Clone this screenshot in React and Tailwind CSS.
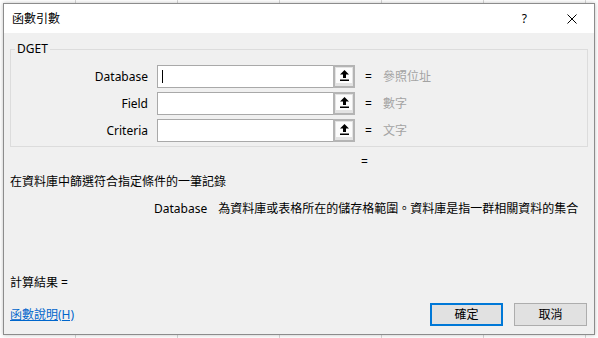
const font = { fontFamily: '"Noto Sans", "Noto Sans CJK TC", sans-serif' };

function RefButton() {
  return (
    <div className="w-[22px] h-full border-2 border-[#b4b4b4] bg-[#e3e3e3] px-[1px] pt-[1px] pb-[3px]">
      <div className="h-full bg-[#fcfcfc] flex items-center justify-center">
        <svg width="9" height="11" viewBox="0 0 9 11">
          <path d="M4.5 0 L9 4.5 H6 V8 H3 V4.5 H0 Z" fill="#000" />
          <rect x="0" y="9.5" width="9" height="1.5" fill="#000" />
        </svg>
      </div>
    </div>
  );
}

function ArgRow({ label, hint, caret }) {
  return (
    <div className="flex items-center h-[23px]">
      <div className="w-[137px] text-right">{label}</div>
      <div className="ml-[9px] w-[198px] h-full flex">
        <div className="flex-1 h-full bg-white border border-r-0 border-[#a9a9a9] flex items-center pl-[4px]">
          {caret && <div className="w-px h-[13px] bg-black" />}
        </div>
        <RefButton />
      </div>
      <div className="ml-[10px] w-[8px]">=</div>
      <div className="ml-[10px] text-[#a3a3a3]">{hint}</div>
    </div>
  );
}

export default function App() {
  return (
    <div
      className="w-[598px] h-[338px] p-[3px] bg-white bg-[linear-gradient(90deg,#d6d6d6_1px,transparent_1px)] bg-[length:102px_100%] bg-[position:75px_0] text-[12px] leading-4 text-black"
      style={font}
    >
      <div className="w-full h-full border border-[#8c8c8c] bg-[#f0f0f0] flex flex-col shadow-[0_0_4px_rgba(0,0,0,0.25)]">
        <div className="h-[29px] bg-white flex items-center pl-[8px] shrink-0">
          <span>函數引數</span>
          <span className="ml-auto mr-[40px]">?</span>
          <svg className="mr-[17px]" width="10" height="10" viewBox="0 0 10 10">
            <path d="M0.5 0.5 L9.5 9.5 M9.5 0.5 L0.5 9.5" stroke="#000" strokeWidth="1" />
          </svg>
        </div>

        <fieldset className="mx-[6px] mt-[8px] border border-[#dcdcdc] px-0 pt-[8px] pb-[4px] flex flex-col gap-[4px]">
          <legend className="ml-[4px] px-[2px] leading-4">DGET</legend>
          <ArgRow label="Database" hint="參照位址" caret />
          <ArgRow label="Field" hint="數字" />
          <ArgRow label="Criteria" hint="文字" />
        </fieldset>

        <div className="mt-[7px] pl-[357px]">=</div>
        <div className="mt-[4px] pl-[6px]">在資料庫中篩選符合指定條件的一筆記錄</div>
        <div className="mt-[11px] pl-[150px] flex">
          <span>Database</span>
          <span className="ml-[11px]">為資料庫或表格所在的儲存格範圍。資料庫是指一群相關資料的集合</span>
        </div>

        <div className="mt-[58px] pl-[6px]">計算結果 =</div>

        <div className="mt-[12px] flex items-center pl-[6px] pr-[7px]">
          <span className="text-[#0066cc] underline">函數說明(H)</span>
          <button className="ml-auto w-[73px] h-[23px] border-2 border-[#0078d7] bg-[#e1e1e1]">確定</button>
          <button className="ml-[11px] w-[73px] h-[23px] border border-[#adadad] bg-[#e1e1e1]">取消</button>
        </div>
      </div>
    </div>
  );
}
